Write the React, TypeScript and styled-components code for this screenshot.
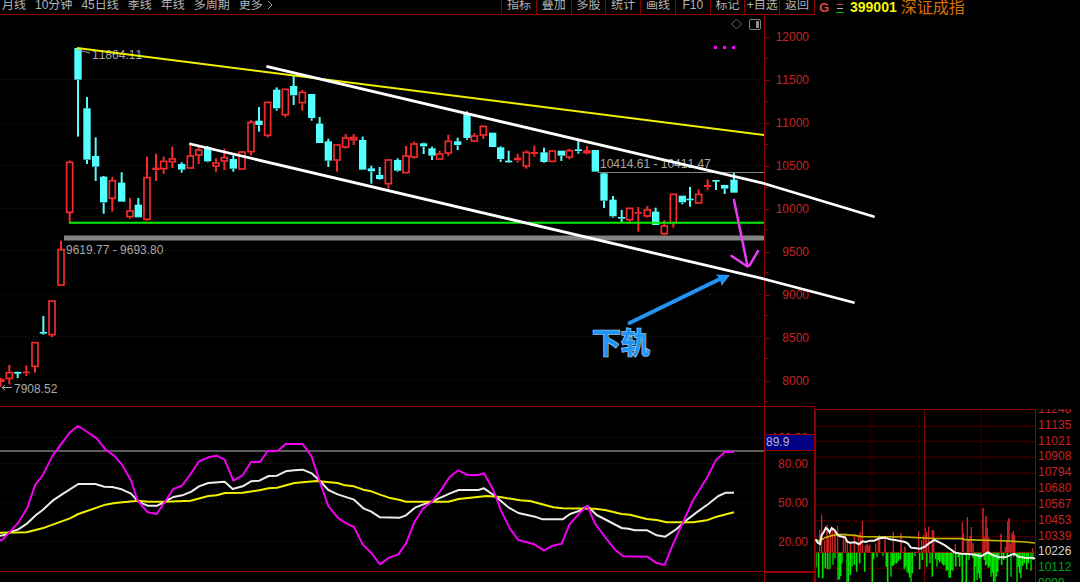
import React from "react";
import styled, { createGlobalStyle, css } from "styled-components";

const GlobalStyle = createGlobalStyle`
  *, *::before, *::after { box-sizing: border-box; }
  body {
    margin: 0;
    background: #000;
    font-family: "Liberation Sans", "Noto Sans CJK SC", sans-serif;
    font-size: 12px;
    font-kerning: none;
    overflow-x: hidden;
  }
`;

const RED = "#8c0000";
const GRID = "#8a0000";
const LABEL = "#c42424";
const UP = "#f62c2c";
const DOWN = "#54ffff";

const Page = styled.div`
  display: grid;
  grid-template-columns: minmax(0, 1fr) 265px;
  min-height: 100vh;
  background: #000;
`;

const Main = styled.main`
  display: flex;
  flex-direction: column;
  min-width: 0;
`;

const Toolbar = styled.header`
  display: flex;
  justify-content: space-between;
  align-items: flex-end;
  height: 15px;
  overflow: hidden;
  border-bottom: 1px solid ${RED};
  border-right: 1px solid ${RED};
`;

const Periods = styled.nav`
  display: flex;
  gap: 9px;
  padding-left: 2px;
`;

const Tools = styled.div`
  display: grid;
  grid-template-columns: repeat(9, minmax(0, 1fr));
  width: 313px;
`;

const BarButton = styled.button<{ $boxed?: boolean }>`
  display: flex;
  align-items: center;
  justify-content: center;
  gap: 4px;
  height: 18px;
  padding: 0;
  border: 0;
  background: none;
  color: #b4b4b4;
  font: inherit;
  line-height: 18px;
  white-space: nowrap;
  ${(p) => p.$boxed && css`border-left: 1px solid ${RED};`}
`;

const Panel = styled.section<{ $ruled?: boolean }>`
  position: relative;
  display: grid;
  grid-template-columns: minmax(0, 1fr) 51px;
  ${(p) => p.$ruled && css`
    border-top: 1px solid ${RED};
    border-bottom: 1px solid ${RED};
  `}
`;

const Plot = styled.svg`
  display: block;
  width: 100%;
  height: auto;
  position: relative;
  z-index: 1;
  overflow: visible;
`;

const PriceAxis = styled.div`
  display: grid;
  grid-template-rows: repeat(9, 1fr);
  padding: 1px 6px 4px 0;
  border-left: 1px solid ${RED};
`;

const PriceTick = styled.span`
  position: relative;
  display: flex;
  align-items: center;
  justify-content: flex-end;
  color: ${LABEL};
  &::before, &::after {
    content: "";
    position: absolute;
    left: 0;
    height: 1px;
    background: ${RED};
  }
  &::before { top: 50%; width: 5px; }
  &::after { bottom: 0; width: 3px; }
`;

const OscAxis = styled.div`
  position: relative;
  display: flex;
  flex-direction: column;
  align-items: flex-end;
  padding: 24px 6px 0 0;
  border-left: 1px solid ${RED};
  border-right: 1px solid ${RED};
`;

const OscTick = styled.span<{ $gap?: number }>`
  margin-top: ${(p) => p.$gap ?? 0}px;
  line-height: 14px;
  color: ${LABEL};
`;

const Reading = styled.output`
  position: absolute;
  top: 27px;
  left: 0;
  right: 0;
  height: 17px;
  padding-left: 1px;
  border: solid ${RED};
  border-width: 1px 0;
  background: #000084;
  color: #b8b8d0;
  line-height: 15px;
`;

const Footer = styled.footer`
  display: grid;
  grid-template-columns: minmax(0, 1fr) 51px;
  flex: 1;
  min-height: 10px;
`;

const FooterCell = styled.div`
  grid-column: 2;
  border: 1px solid #a00000;
  border-bottom: 0;
`;

const Sidebar = styled.aside`
  display: flex;
  flex-direction: column;
  justify-content: space-between;
  min-width: 0;
`;

const Quote = styled.h1`
  display: flex;
  align-items: center;
  height: 15px;
  margin: 0;
  padding-left: 4px;
  font-size: 14px;
  line-height: 15px;
`;

const Market = styled.span`
  width: 17px;
  color: #dc4646;
  font-size: 13px;
`;

const Code = styled.span`
  margin: 0 4px 0 6px;
  color: #f6f600;
`;

const Name = styled.span`
  color: #d87000;
  font-size: 16px;
  font-weight: 400;
`;

const Intraday = styled.section`
  display: grid;
  grid-template-columns: 221px minmax(0, 1fr);
  height: 173px;
  overflow: hidden;
`;

const Levels = styled.ol`
  display: flex;
  flex-direction: column;
  height: 190px;
  margin: -8px 0 0;
  padding: 0 0 0 2px;
  list-style: none;
`;

const LevelClip = styled.div`
  overflow: hidden;
`;

const Level = styled.li<{ $tone: string }>`
  flex: 1 1 0;
  min-height: 0;
  line-height: 16px;
  color: ${(p) => p.$tone};
`;

// x, high, body top, body bottom, low, rising (1) or falling (0)
const candles: number[][] = [
  [2, 1133, 1137, 1146, 1160, 1], [28, 1095, 1116, 1137, 1153, 1], [53, 1115, 1117, 1120, 1134, 0],
  [79, 1096, 1116, 1121, 1128, 1], [105, 1026, 1026, 1101, 1118, 1], [130, 948, 997, 1001, 1004, 0],
  [156, 901, 901, 1006, 1011, 1], [183, 722, 747, 857, 857, 1], [209, 481, 485, 639, 667, 1],
  [234, 145, 145, 240, 410, 0], [261, 291, 326, 480, 492, 0], [287, 412, 469, 501, 543, 0],
  [311, 528, 531, 608, 641, 0], [337, 531, 540, 597, 635, 1], [365, 517, 549, 606, 606, 0],
  [390, 594, 631, 652, 656, 1], [415, 594, 615, 653, 653, 0], [441, 470, 531, 660, 662, 1],
  [468, 461, 504, 511, 543, 1], [491, 470, 482, 508, 522, 1], [517, 440, 475, 487, 504, 1],
  [545, 487, 493, 510, 518, 0], [571, 435, 466, 506, 506, 1], [596, 440, 448, 467, 492, 1],
  [623, 438, 443, 485, 487, 0], [648, 475, 487, 500, 515, 1], [673, 446, 471, 485, 510, 1],
  [700, 466, 478, 507, 515, 0], [726, 454, 454, 509, 509, 1], [753, 360, 365, 457, 466, 1],
  [777, 321, 363, 376, 395, 0], [803, 305, 305, 408, 412, 1], [830, 262, 270, 326, 332, 0],
  [856, 266, 266, 346, 352, 1], [881, 228, 259, 287, 315, 0], [907, 270, 275, 310, 332, 1],
  [935, 283, 283, 355, 362, 0], [959, 351, 372, 430, 430, 0], [985, 416, 425, 483, 501, 0],
  [1011, 433, 433, 482, 515, 1], [1037, 402, 412, 443, 446, 1], [1061, 402, 411, 421, 435, 1],
  [1088, 410, 421, 510, 510, 0], [1114, 497, 506, 515, 551, 0], [1139, 501, 526, 538, 540, 0],
  [1165, 478, 478, 553, 566, 1], [1193, 475, 481, 513, 515, 0], [1218, 438, 466, 520, 520, 1],
  [1242, 425, 430, 473, 476, 1], [1271, 428, 431, 440, 462, 0], [1296, 440, 446, 468, 480, 0],
  [1319, 452, 460, 479, 479, 1], [1345, 404, 422, 461, 468, 1], [1373, 413, 425, 436, 450, 0],
  [1401, 334, 340, 415, 420, 0], [1423, 399, 406, 425, 425, 1], [1450, 377, 377, 407, 417, 1],
  [1478, 399, 399, 442, 442, 0], [1502, 439, 443, 478, 486, 0], [1526, 452, 483, 487, 488, 0],
  [1553, 461, 474, 482, 488, 1], [1579, 451, 455, 500, 506, 1], [1603, 437, 457, 463, 470, 1],
  [1632, 443, 458, 487, 489, 0], [1657, 451, 451, 486, 486, 1], [1684, 453, 453, 468, 483, 0],
  [1708, 446, 450, 473, 478, 1], [1735, 421, 449, 454, 461, 0], [1761, 438, 451, 460, 463, 1],
  [1786, 451, 451, 516, 516, 0], [1812, 519, 521, 603, 624, 0], [1839, 588, 600, 650, 653, 0],
  [1865, 630, 652, 656, 667, 0], [1889, 623, 623, 661, 672, 1], [1915, 621, 637, 641, 695, 1],
  [1942, 618, 628, 650, 653, 1], [1967, 623, 636, 676, 676, 0], [1993, 660, 676, 703, 706, 1],
  [2020, 581, 581, 670, 683, 1], [2047, 588, 588, 608, 613, 0], [2070, 561, 597, 601, 620, 0],
  [2096, 568, 581, 611, 611, 1], [2123, 538, 556, 562, 570, 1], [2148, 541, 541, 545, 570, 0],
  [2174, 556, 556, 567, 582, 0], [2202, 519, 540, 579, 579, 0],
];

function Candle({ c }: { c: number[] }) {
  const [x, high, top, bottom, low, rising] = c;
  const hollow = rising === 1 && bottom - top > 8;
  return (
    <g stroke={rising ? UP : DOWN} fill={rising ? UP : DOWN} strokeWidth={6}>
      {high < top && <path d={`M${x} ${high}V${top}`} />}
      {low > bottom && <path d={`M${x} ${bottom}V${low}`} />}
      {hollow ? (
        <rect x={x - 9} y={top + 2} width={18} height={bottom - top - 4} fill="none" strokeWidth={5} />
      ) : (
        <rect x={x - 11} y={top - 1} width={22} height={Math.max(bottom - top, 5)} stroke="none" />
      )}
    </g>
  );
}

const J =
  "0,421 5,421 28,397 55,368 82,323 106,254 128,226 158,167 185,130 210,97 234,78 262,96 290,115 316,148 342,167 366,194 394,243 412,300 443,337 470,342 495,305 520,267 546,257 572,222 597,184 625,172 650,167 674,179 700,242 728,226 753,186 780,186 803,153 833,153 857,132 908,132 935,170 960,247 985,318 1013,353 1038,370 1062,381 1088,433 1114,459 1140,493 1167,473 1195,463 1218,430 1243,367 1270,325 1295,306 1322,272 1348,232 1375,211 1403,225 1435,225 1452,220 1480,270 1503,332 1530,386 1555,420 1603,433 1632,452 1658,437 1685,431 1708,374 1740,338 1762,317 1785,371 1815,411 1845,449 1870,469 1942,470 1968,488 1994,495 2020,430 2050,365 2078,303 2120,235 2148,180 2175,156 2202,156";
const K =
  "0,407 14,405 28,397 55,388 82,370 108,345 128,330 158,302 185,284 235,252 286,252 313,260 337,261 365,268 393,281 415,305 443,317 472,317 495,305 520,291 547,286 574,275 597,259 625,249 674,245 698,267 728,259 753,244 778,242 806,228 831,227 857,214 883,211 908,209 935,220 960,243 985,270 1013,283 1062,299 1090,325 1114,335 1140,352 1200,353 1218,346 1245,323 1270,313 1295,305 1350,280 1376,270 1435,270 1452,265 1485,288 1525,322 1555,339 1605,350 1628,358 1688,358 1710,342 1740,332 1762,318 1790,345 1865,384 1885,386 1905,391 1942,391 1970,406 1996,410 2030,387 2060,360 2090,337 2125,312 2155,288 2178,278 2202,278";
const D =
  "0,398 80,397 133,383 210,355 235,342 316,314 345,309 415,302 445,305 495,305 572,302 625,288 650,286 675,279 728,278 778,271 806,265 831,263 883,249 950,243 1013,249 1035,256 1062,259 1090,269 1114,274 1140,284 1167,293 1200,300 1218,305 1345,305 1376,297 1460,288 1500,291 1560,301 1590,303 1660,322 1688,325 1785,326 1815,330 1865,342 1890,344 1940,357 1970,360 2000,367 2080,367 2120,361 2150,350 2202,337";

// bars of the intraday chart: x, then the end that lies away from the zero line
const gains: number[][] = [
  [44, 390], [50, 344], [59, 420], [66, 375], [70, 415], [76, 400], [82, 390], [90, 395], [98, 377], [115, 410],
  [121, 400], [127, 420], [136, 430], [148, 408], [160, 405], [166, 395], [172, 363], [181, 436], [186, 433],
  [190, 437], [194, 434], [212, 430], [220, 415], [224, 405], [240, 410], [265, 395], [288, 400], [300, 440],
  [341, 392], [350, 420], [356, 405], [361, 384], [365, 396], [371, 380], [382, 390], [386, 391], [451, 432],
  [472, 367], [475, 400], [487, 351], [490, 420], [495, 408], [499, 381], [504, 430], [534, 324], [538, 410],
  [543, 348], [547, 383], [551, 412], [588, 401], [601, 440], [605, 420], [608, 364], [612, 354], [616, 430],
  [621, 400], [625, 393], [629, 405], [683, 445],
];
const losses: number[][] = [
  [33, 502], [41, 533], [53, 535], [61, 505], [68, 508], [75, 508], [84, 495], [90, 475], [99, 540], [103, 538],
  [107, 528], [111, 490], [126, 546], [130, 546], [136, 525], [141, 500], [148, 495], [155, 515], [164, 490],
  [179, 515], [202, 546], [206, 478], [216, 472], [234, 468], [244, 500], [248, 546], [258, 530], [262, 498],
  [266, 496], [270, 490], [275, 490], [280, 483], [286, 478], [298, 508], [302, 500], [306, 515], [310, 520],
  [314, 532], [318, 546], [322, 520], [330, 468], [344, 508], [352, 480], [365, 500], [375, 490], [382, 530],
  [392, 478], [396, 500], [400, 480], [404, 487], [408, 484], [412, 492], [416, 497], [420, 494], [424, 512],
  [428, 510], [432, 532], [436, 534], [440, 510], [444, 512], [452, 500], [460, 472], [464, 500], [472, 546],
  [484, 546], [492, 480], [504, 475], [508, 546], [512, 500], [516, 540], [520, 520], [524, 535], [528, 546],
  [538, 480], [542, 497], [546, 492], [550, 503], [554, 500], [558, 530], [562, 518], [566, 546], [570, 546],
  [574, 530], [578, 515], [582, 480], [590, 495], [596, 480], [607, 546], [618, 530], [626, 470], [636, 546],
  [640, 500], [644, 520], [648, 535], [653, 498], [658, 490], [665, 508], [670, 490], [678, 512], [684, 480],
];

const periods = ["月线", "10分钟", "45日线", "季线", "年线", "多周期"];
const tools = ["指标", "叠加", "多股", "统计", "画线", "F10", "标记", "+自选", "返回"];
const prices = ["12000", "11500", "11000", "10500", "10000", "9500", "9000", "8500", "8000"];
const levels = ["11248", "11135", "11021", "10908", "10794", "10680", "10567", "10453", "10339", "10226", "10112", "9999"];

function levelTone(i: number) {
  if (i < 9) return LABEL;
  return i === 9 ? "#d4d4d4" : "#00a014";
}

function PriceChart() {
  return (
    <Plot viewBox="0 15 764 391" role="img" aria-label="深证成指 K线">
      <g stroke={GRID} strokeDasharray="1 3">
        {[79, 123, 165, 208, 250, 294, 336, 379].map((y) => (
          <path key={y} d={`M1 ${y + 0.5}H764`} />
        ))}
      </g>
      <path d="M64 238H764" stroke="#848484" strokeWidth="5" />
      <path d="M598 172.500H764" stroke="#808080" />
      <g transform="scale(0.33333)">
        {candles.map((c) => (
          <Candle key={c[0]} c={c} />
        ))}
      </g>
      <path d="M69 222.700H764" stroke="#00f000" strokeWidth="2" />
      <g fill="#a8a8a8" fontSize="12">
        <text x="92" y="59">11864.11</text>
        <text x="600" y="168">10414.61 - 10411.47</text>
        <text x="66" y="254">9619.77 - 9693.80</text>
        <text x="14" y="393">7908.52</text>
      </g>
      <path d="M78 50L90 53M12 387.500H2M5 385L2 387.500L5 390" stroke="#a8a8a8" fill="none" />
      <path d="M77 48L764 135" stroke="#f0f000" strokeWidth="2" />
      <g stroke="#fff" strokeWidth="2.800" fill="none" strokeLinecap="round">
        <path d="M267.500 66.700L764 183.500L873.500 216.500" />
        <path d="M190.500 144L764 279L853.500 302.500" />
      </g>
      <g fill="#f0f">
        <path d="M714 46h3v3h-3zM723 46h3v3h-3zM732 46h3v3h-3z" />
      </g>
      <path d="M736.500 19L741.500 24L736.500 29L731.500 24Z" fill="none" stroke="#666" />
      <rect x="749.500" y="19.500" width="11" height="10" rx="1.500" fill="none" stroke="#808080" />
      <path d="M756 21h3v7h-3z" fill="#909090" />
      <path
        d="M734 200L747.500 266M731.500 256L747.500 266.500M749.500 265.500L758 251"
        fill="none"
        stroke="#e83cf4"
        strokeWidth="2.500"
        strokeLinecap="round"
      />
      <path d="M629.500 323L722 278" stroke="#2094f4" strokeWidth="4" strokeLinecap="round" />
      <path d="M730 275L716 274.500L720 279L721.500 286Z" fill="#2094f4" />
      <text
        x="592"
        y="354"
        fontSize="29"
        fontWeight="700"
        fontFamily="'Noto Sans CJK SC', sans-serif"
        fill="#2094f4"
        stroke="#90c4f0"
        strokeWidth="1.500"
        paintOrder="stroke"
      >
        下轨
      </text>
    </Plot>
  );
}

function Oscillator() {
  return (
    <Plot viewBox="0 21 2292 492" role="img" aria-label="KDJ">
      <g stroke={GRID} strokeWidth="3" strokeDasharray="3 9">
        {[113, 190, 307, 425].map((y) => (
          <path key={y} d={`M3 ${y}H2292`} />
        ))}
      </g>
      <path d="M0 153H2292" stroke="#7c7c7c" strokeWidth="5" />
      <g fill="none" strokeWidth="6" strokeLinejoin="round">
        <polyline points={K} stroke="#ececec" />
        <polyline points={D} stroke="#f0f000" />
        <polyline points={J} stroke="#f000f0" />
      </g>
    </Plot>
  );
}

function IntradayChart() {
  return (
    <Plot viewBox="30 27 663 519" role="img" aria-label="分时">
      <g stroke={GRID} strokeWidth="3" strokeDasharray="3 3">
        {[78, 125, 172, 220, 267, 315, 363, 410, 505].map((y) => (
          <path key={y} d={`M33 ${y}H690`} opacity="0.700" />
        ))}
        <path d="M196 30V546M528 30V546" opacity="0.700" />
      </g>
      <g stroke={UP} strokeWidth="4">
        {gains.map(([x, y]) => (
          <path key={x} d={`M${x} 457V${y}`} opacity={x % 3 === 0 ? 1 : 0.8} />
        ))}
      </g>
      <g stroke="#00e400" strokeWidth="5">
        {losses.map(([x, y]) => (
          <path key={x} d={`M${x} 457V${y}`} opacity={x % 3 === 0 ? 0.8 : 1} />
        ))}
      </g>
      <path d="M30 457H690" stroke="#a01400" strokeWidth="3" />
      <path d="M31.500 546V28.500H691.500V546M359 28V546" fill="none" stroke={RED} strokeWidth="3" />
      <polyline
        fill="none"
        stroke="#c0b800"
        strokeWidth="5"
        points="32,420 45,423 60,413 80,407 105,403 150,406 170,410 300,411 380,415 470,416 480,419 610,423 660,426 690,429"
      />
      <polyline
        fill="none"
        stroke="#f4f4f4"
        strokeWidth="6"
        points="32,418 38,428 45,432 50,405 56,397 62,384 68,388 74,397 80,384 88,390 95,400 103,408 120,412 127,425 135,428 150,427 162,433 172,424 182,426 195,422 208,422 222,415 240,413 255,418 270,420 300,426 308,430 318,443 345,446 360,440 372,430 388,420 405,428 420,436 435,447 450,458 468,461 490,462 510,464 528,469 540,462 550,457 560,464 580,471 600,472 615,466 628,461 640,470 665,474 680,473 690,476"
      />
    </Plot>
  );
}

export default function App() {
  return (
    <Page>
      <GlobalStyle />
      <Main>
        <Toolbar>
          <Periods>
            {periods.map((p) => (
              <BarButton key={p}>{p}</BarButton>
            ))}
            <BarButton>
              更多
              <svg width="6" height="10" viewBox="0 0 6 10" fill="none" stroke="#a0a0a0" aria-hidden="true">
                <path d="M1 1L5 5L1 9" />
              </svg>
            </BarButton>
          </Periods>
          <Tools>
            {tools.map((t) => (
              <BarButton key={t} $boxed>
                {t}
              </BarButton>
            ))}
          </Tools>
        </Toolbar>
        <Panel>
          <PriceChart />
          <PriceAxis>
            {prices.map((p) => (
              <PriceTick key={p}>{p}</PriceTick>
            ))}
          </PriceAxis>
        </Panel>
        <Panel $ruled>
          <Oscillator />
          <OscAxis>
            <OscTick>100.00</OscTick>
            <OscTick $gap={12}>80.00</OscTick>
            <OscTick $gap={25}>50.00</OscTick>
            <OscTick $gap={25}>20.00</OscTick>
            <Reading>89.9</Reading>
          </OscAxis>
        </Panel>
        <Footer>
          <FooterCell />
        </Footer>
      </Main>
      <Sidebar>
        <Quote>
          <Market>G</Market>
          <svg width="8" height="10" viewBox="0 0 8 10" aria-hidden="true">
            <path d="M1 1.500H7" stroke="#d03838" />
            <path d="M1 5.500H7" stroke="#b0b0b0" />
            <path d="M0 9.500H8" stroke="#00c000" />
          </svg>
          <Code>399001</Code>
          <Name>深证成指</Name>
        </Quote>
        <Intraday>
          <IntradayChart />
          <LevelClip>
            <Levels>
              {levels.map((l, i) => (
                <Level key={l} $tone={levelTone(i)}>
                  {l}
                </Level>
              ))}
            </Levels>
          </LevelClip>
        </Intraday>
      </Sidebar>
    </Page>
  );
}
